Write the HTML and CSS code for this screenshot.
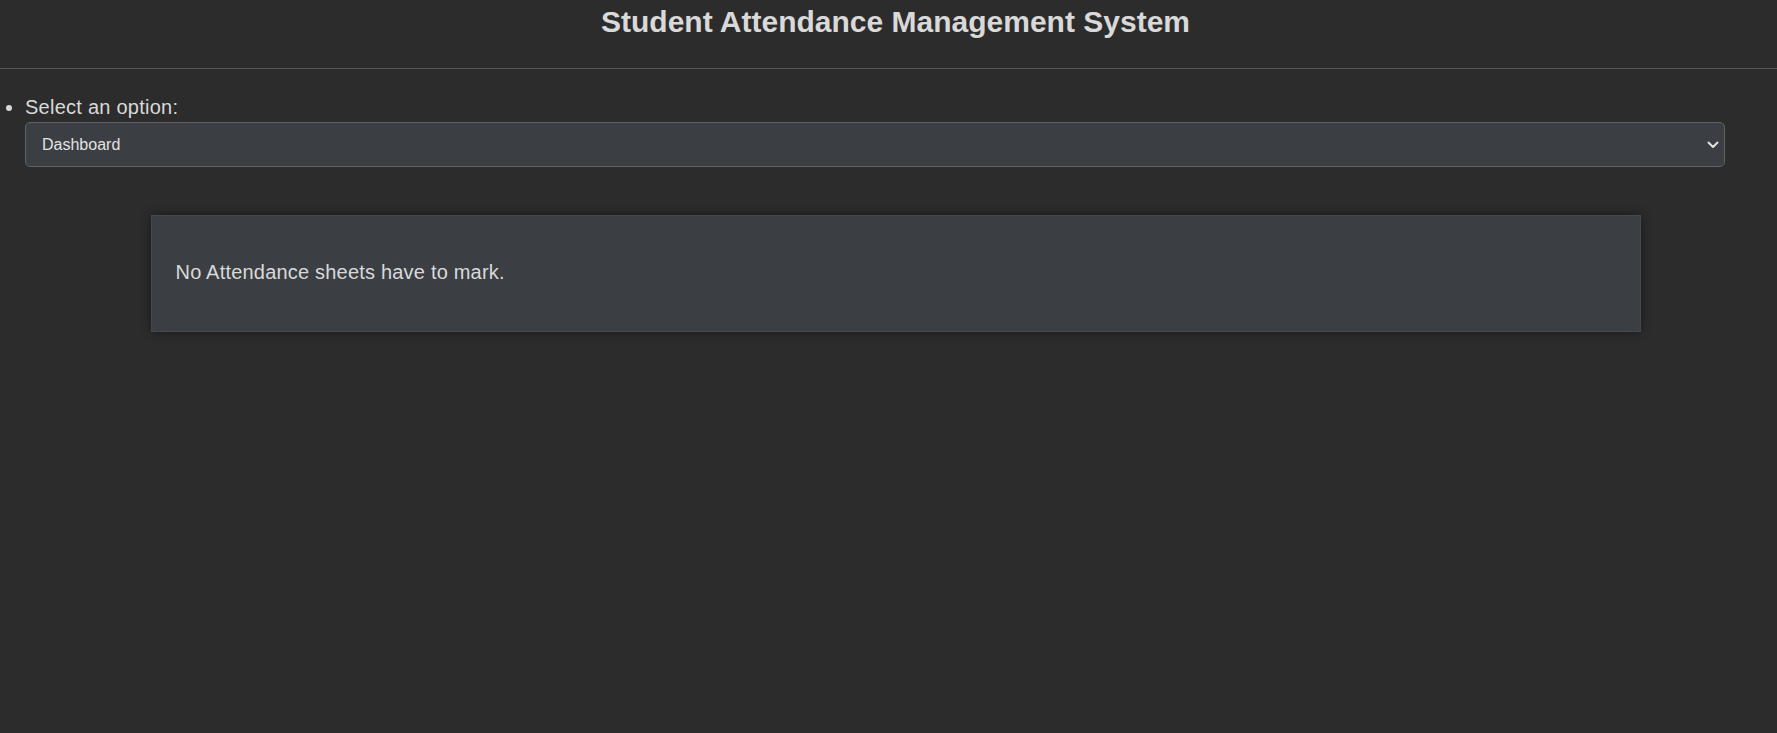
FILE: index.html
```html
<!DOCTYPE html>
<html lang="en">
<head>
<meta charset="utf-8">
<title>Student Attendance Management System</title>
<link rel="stylesheet" href="styles.css">
</head>
<body>
<header class="site-header">
  <h1 class="site-title">Student Attendance Management System</h1>
</header>
<ul class="options">
  <li class="option-item">
    <label class="option-label" for="menu">Select an option:</label>
    <div class="select-wrap">
      <select id="menu" class="option-select">
        <option>Dashboard</option>
        <option>Mark Attendance</option>
        <option>View Reports</option>
      </select>
      <svg class="chevron" width="12" height="8" viewBox="0 0 12 8" aria-hidden="true">
        <path d="M1.5 1.5 L6 6 L10.5 1.5" fill="none" stroke="#e0e0e0" stroke-width="2" stroke-linecap="round" stroke-linejoin="round"/>
      </svg>
    </div>
  </li>
</ul>
<main class="content">
  <div class="card">
    <p class="card-text">No Attendance sheets have to mark.</p>
  </div>
</main>
</body>
</html>
```
FILE: styles.css
```css
html, body {
  margin: 0;
  padding: 0;
}
body {
  background: #2c2c2c;
  color: #d9d9d9;
  font-family: "Liberation Sans", Arial, sans-serif;
  min-height: 733px;
}
.site-header {
  padding: 4px 0 29px 14px;
  border-bottom: 1px solid #555555;
}
.site-title {
  margin: 0;
  font-size: 30px;
  line-height: 35px;
  font-weight: bold;
  text-align: center;
  color: #d9d9d9;
}
.options {
  margin: 27px 0 0 0;
  padding: 0 52px 0 25px;
  font-size: 20px;
  line-height: 23px;
}
.option-item {
  color: #d9d9d9;
}
.option-label {
  display: block;
  letter-spacing: 0.25px;
}
.select-wrap {
  position: relative;
  margin-top: 3px;
}
.option-select {
  appearance: none;
  -webkit-appearance: none;
  display: block;
  width: 100%;
  height: 45px;
  box-sizing: border-box;
  background: #3b3f43;
  color: #e2e2e2;
  border: 1px solid #5e6165;
  border-radius: 5px;
  padding: 0 40px 0 16px;
  font-family: "Liberation Sans", Arial, sans-serif;
  font-size: 16px;
  outline: none;
}
.chevron {
  position: absolute;
  right: 6px;
  top: 19px;
  pointer-events: none;
}
.content {
  padding-left: 14px;
}
.card {
  width: 1490px;
  box-sizing: border-box;
  margin: 48px auto 0;
  background: #3b3f43;
  border: 1px solid #45494d;
  box-shadow: 0 0 10px rgba(0, 0, 0, 0.45);
  padding: 45px 24px 47px;
}
.card-text {
  margin: 0;
  font-size: 20px;
  line-height: 23px;
  letter-spacing: 0.2px;
  color: #d9d9d9;
}
```
